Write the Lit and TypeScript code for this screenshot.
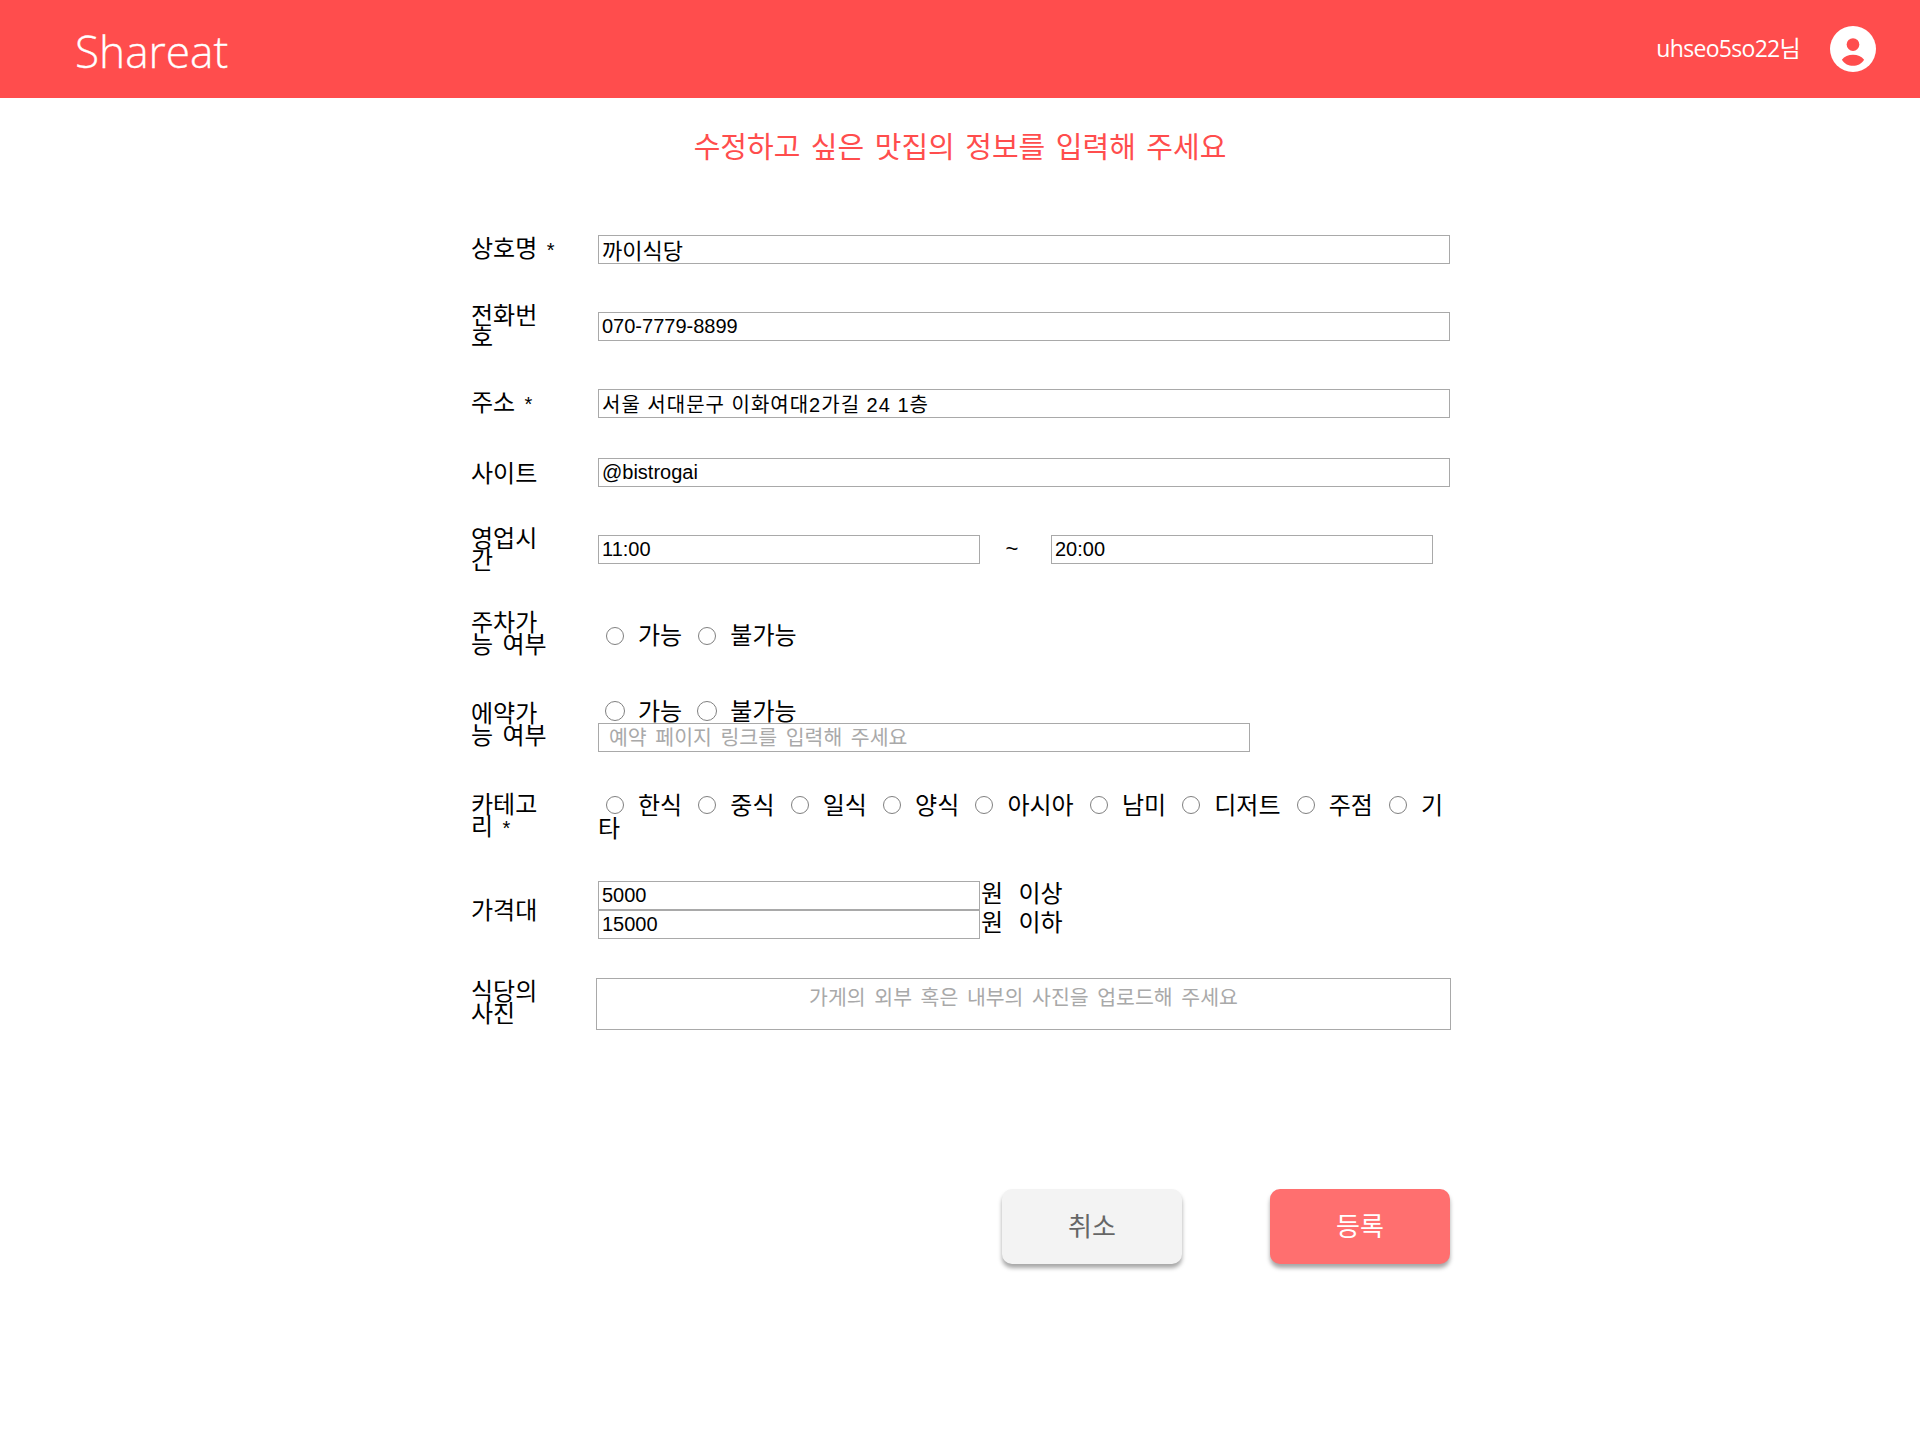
import { LitElement, html, css } from 'lit';
import { customElement } from 'lit/decorators.js';

@customElement('app-root')
export class AppRoot extends LitElement {
  static styles = css`
    :host {
      display: block;
      min-height: 1452px;
      background: #fff;
      color: #000;
      font-family: "Liberation Sans", "Noto Sans CJK KR", sans-serif;
    }

    header {
      height: 98px;
      background: #ff4d4d;
      color: #fff;
      display: flex;
      align-items: center;
      justify-content: space-between;
      padding: 0 44px 0 75px;
      box-sizing: border-box;
    }

    .logo {
      padding-top: 3px;
      font-family: "Open Sans", sans-serif;
      font-size: 44.2px;
      font-weight: 300;
      -webkit-text-stroke: 0.3px #fff;
    }

    .user {
      display: flex;
      align-items: center;
      gap: 30px;
    }

    .user-name {
      padding-bottom: 4px;
      font-family: "Open Sans", "Noto Sans CJK KR", sans-serif;
      font-size: 23px;
      letter-spacing: -0.7px;
    }

    .user svg {
      width: 46px;
      height: 46px;
      display: block;
    }

    h1 {
      margin: 0;
      padding-top: 31px;
      height: 105px;
      box-sizing: border-box;
      text-align: center;
      font-family: "Noto Sans CJK KR", sans-serif;
      font-size: 29px;
      line-height: 32px;
      font-weight: 400;
      color: #ff4d4d;
      word-spacing: 4px;
    }

    form {
      width: 980px;
      margin-left: 471px;
      padding-top: 32px;
    }

    .row {
      display: flex;
      align-items: center;
      margin-bottom: 40px;
    }

    .row.gap-41 {
      margin-bottom: 41px;
    }

    .row.gap-39 {
      margin-bottom: 39px;
    }

    .label {
      width: 87px;
      margin-right: 40px;
      flex: none;
      font-family: "Noto Sans CJK KR", sans-serif;
      font-size: 24px;
      line-height: 22px;
      word-spacing: 4px;
      transform: translateY(-1px);
    }

    .label.photo {
      transform: translateY(-3px);
    }

    .req {
      font-family: "Liberation Sans", sans-serif;
      font-size: 20px;
    }

    .field {
      width: 852px;
      flex: none;
    }

    input.text {
      display: block;
      box-sizing: border-box;
      width: 852px;
      height: 29px;
      margin: 0;
      padding: 0 3px;
      border: 1px solid #a9a9a9;
      border-radius: 0;
      outline: none;
      font-family: "Liberation Sans", "Noto Sans CJK KR", sans-serif;
      font-size: 20px;
      color: #000;
    }

    input.ko {
      padding-bottom: 2px;
      font-family: "Noto Sans CJK KR", sans-serif;
      font-size: 22px;
    }

    input.addr {
      font-size: 20px;
      letter-spacing: 1px;
    }

    input.half {
      width: 382px;
    }

    input.link {
      width: 652px;
      padding: 0 0 4px 10px;
      font-family: "Noto Sans CJK KR", sans-serif;
      font-size: 20.5px;
      word-spacing: 4px;
    }

    input::placeholder {
      color: #a9a9a9;
      opacity: 1;
    }

    .hours {
      display: flex;
      align-items: center;
    }

    .tilde {
      box-sizing: border-box;
      width: 71px;
      padding-right: 7px;
      text-align: center;
      font-size: 22px;
    }

    .radios {
      font-family: "Noto Sans CJK KR", sans-serif;
      font-size: 24px;
      line-height: 23px;
    }

    .radios.single {
      line-height: 27px;
    }

    .radios.category {
      padding-bottom: 2px;
    }

    .radios input {
      appearance: none;
      box-sizing: border-box;
      width: 18px;
      height: 18px;
      margin: 0 14px 0 8px;
      border: 1.5px solid #808080;
      border-radius: 50%;
      background: #fff;
      vertical-align: -1px;
    }

    .radios.category input {
      vertical-align: 0;
    }

    .radios.large input {
      width: 20px;
      height: 20px;
      margin: 0 13px 0 7px;
    }

    .radios span {
      margin-right: 8.2px;
    }

    .price {
      display: flex;
      align-items: center;
      height: 29px;
      font-family: "Noto Sans CJK KR", sans-serif;
      font-size: 24px;
      word-spacing: 10px;
    }

    .price span {
      margin-left: 1px;
      padding-bottom: 8px;
      line-height: 29px;
    }

    .upload {
      box-sizing: border-box;
      width: 855px;
      height: 52px;
      margin-left: -2px;
      padding-top: 2px;
      border: 1px solid #a9a9a9;
      text-align: center;
      font-family: "Noto Sans CJK KR", sans-serif;
      font-size: 20.5px;
      line-height: 30px;
      color: #a9a9a9;
      word-spacing: 4px;
    }

    .actions {
      display: flex;
      justify-content: flex-end;
      gap: 88px;
      width: 979px;
      margin-top: 159px;
    }

    button {
      width: 180px;
      height: 75px;
      padding: 0 0 4px;
      border: none;
      border-radius: 10px;
      font-family: "Noto Sans CJK KR", sans-serif;
      font-size: 26px;
      box-shadow: 0 4px 4px rgba(0, 0, 0, 0.35);
    }

    .cancel {
      background: #f3f3f3;
      color: #666;
    }

    .submit {
      background: #ff6f6f;
      color: #fff;
    }
  `;

  private radios(name: string, items: string[], variant = '') {
    return html`
      <div class="radios ${variant}">
        ${items.map(item => html`<input type="radio" name=${name} /><span>${item}</span>`)}
      </div>
    `;
  }

  render() {
    const yesNo = ['가능', '불가능'];
    const categories = ['한식', '중식', '일식', '양식', '아시아', '남미', '디저트', '주점', '기타'];

    return html`
      <header>
        <div class="logo">Shareat</div>
        <div class="user">
          <div class="user-name">uhseo5so22님</div>
          <svg viewBox="0 0 24 24">
            <circle cx="12" cy="12" r="12" fill="#fff"></circle>
            <circle cx="12" cy="9.7" r="3.3" fill="#ff4d4d"></circle>
            <path d="M6.2 17.6C7.5 15.8 9.6 15 12 15s4.5.8 5.8 2.6c-1.4 2.2-3.5 3.2-5.8 3.2s-4.4-1-5.8-3.2z" fill="#ff4d4d"></path>
          </svg>
        </div>
      </header>

      <h1>수정하고 싶은 맛집의 정보를 입력해 주세요</h1>

      <form>
        <div class="row">
          <div class="label">상호명 <span class="req">*</span></div>
          <div class="field"><input class="text ko" value="까이식당" /></div>
        </div>
        <div class="row gap-41">
          <div class="label">전화번호</div>
          <div class="field"><input class="text" value="070-7779-8899" /></div>
        </div>
        <div class="row">
          <div class="label">주소 <span class="req">*</span></div>
          <div class="field"><input class="text addr" value="서울 서대문구 이화여대2가길 24 1층" /></div>
        </div>
        <div class="row">
          <div class="label">사이트</div>
          <div class="field"><input class="text" value="@bistrogai" /></div>
        </div>
        <div class="row">
          <div class="label">영업시간</div>
          <div class="field hours">
            <input class="text half" value="11:00" />
            <div class="tilde">~</div>
            <input class="text half" value="20:00" />
          </div>
        </div>
        <div class="row gap-41">
          <div class="label">주차가능 여부</div>
          <div class="field">${this.radios('parking', yesNo, 'single')}</div>
        </div>
        <div class="row">
          <div class="label">에약가능 여부</div>
          <div class="field">
            ${this.radios('booking', yesNo, 'single large')}
            <input class="text link" placeholder="예약 페이지 링크를 입력해 주세요" />
          </div>
        </div>
        <div class="row gap-41">
          <div class="label">카테고리 <span class="req">*</span></div>
          <div class="field">${this.radios('category', categories, 'category')}</div>
        </div>
        <div class="row gap-39">
          <div class="label">가격대</div>
          <div class="field">
            <div class="price"><input class="text half" value="5000" /><span>원 이상</span></div>
            <div class="price"><input class="text half" value="15000" /><span>원 이하</span></div>
          </div>
        </div>
        <div class="row">
          <div class="label photo">식당의 사진</div>
          <div class="field"><div class="upload">가게의 외부 혹은 내부의 사진을 업로드해 주세요</div></div>
        </div>
        <div class="actions">
          <button type="button" class="cancel">취소</button>
          <button type="button" class="submit">등록</button>
        </div>
      </form>
    `;
  }
}

declare global {
  interface HTMLElementTagNameMap {
    'app-root': AppRoot;
  }
}
